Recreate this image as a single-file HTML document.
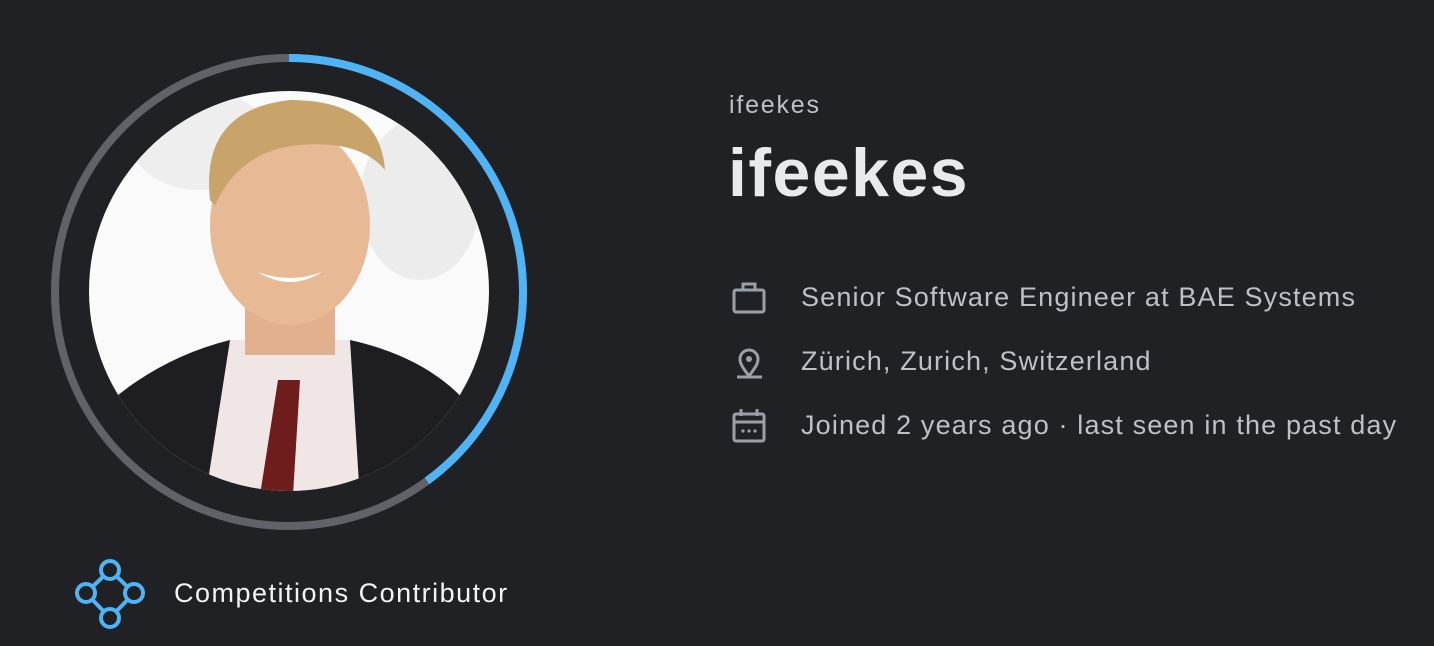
<!DOCTYPE html>
<html><head><meta charset="utf-8"><style>
html,body{margin:0;padding:0;background:#202124;width:1434px;height:646px;overflow:hidden;font-family:"Liberation Sans",sans-serif}
.t{position:absolute;white-space:nowrap}
.d{font-size:27px;color:#bdc1c6;letter-spacing:1.15px}
</style></head><body>
<svg class="t" style="left:0;top:0" width="600" height="646" viewBox="0 0 600 646">
<defs><clipPath id="c"><circle cx="289" cy="291" r="200"/></clipPath></defs>
<circle cx="289" cy="292" r="234" fill="none" stroke="#5f6368" stroke-width="8"/>
<path d="M289 58 A234 234 0 0 1 427 481" fill="none" stroke="#4fb3f6" stroke-width="8"/>
<g clip-path="url(#c)">
<rect x="80" y="80" width="420" height="420" fill="#fafafa"/>
<ellipse cx="200" cy="140" rx="70" ry="50" fill="#eeeeee"/>
<ellipse cx="420" cy="200" rx="60" ry="80" fill="#ececec"/>
<path d="M90 420 Q150 360 230 340 L350 340 Q440 360 480 420 L480 500 L90 500Z" fill="#1e1e22"/>
<path d="M230 340 L350 340 L360 500 L205 500Z" fill="#f1e6e6"/>
<path d="M278 380 L300 380 L293 495 L260 495Z" fill="#6e1c1c"/>
<rect x="245" y="290" width="90" height="65" fill="#e0b08f"/>
<ellipse cx="290" cy="225" rx="80" ry="100" fill="#e8b995"/>
<path d="M210 200 Q200 110 290 100 Q380 100 385 170 Q360 140 300 145 Q240 150 215 205Z" fill="#c9a46a"/>
<path d="M258 272 Q290 292 322 272 Q290 284 258 272Z" fill="#fff"/>
</g>
<g fill="none" stroke="#4fb3f6" stroke-width="4">
<line x1="110" y1="570" x2="86" y2="593"/><line x1="110" y1="570" x2="134" y2="593"/>
<line x1="86" y1="593" x2="110" y2="618"/><line x1="134" y1="593" x2="110" y2="618"/>
<circle cx="110" cy="570" r="9" fill="#202124"/><circle cx="86" cy="593" r="9" fill="#202124"/>
<circle cx="134" cy="593" r="9" fill="#202124"/><circle cx="110" cy="618" r="9" fill="#202124"/>
</g>
</svg>
<div class="t" style="left:174px;top:578px;font-size:27px;letter-spacing:1.5px;color:#f1f3f4">Competitions Contributor</div>
<div class="t" style="left:729px;top:91px;font-size:25px;letter-spacing:1.8px;color:#bdc1c6">ifeekes</div>
<div class="t" style="left:728px;top:134px;font-size:68px;letter-spacing:1.5px;font-weight:bold;color:#e8eaed">ifeekes</div>
<svg class="t" style="left:725px;top:275px" width="60" height="180" viewBox="0 0 60 180" fill="none" stroke="#9aa0a6" stroke-width="3">
<rect x="9" y="15" width="30" height="22" rx="2"/><path d="M18 15 V9 H30 V15"/>
<path d="M24 101 C18 93 15 89 15 84 A9 9 0 0 1 33 84 C33 89 30 93 24 101Z"/><circle cx="24" cy="84" r="3" fill="#9aa0a6" stroke="none"/>
<line x1="12" y1="102" x2="37" y2="102"/>
<rect x="9" y="139" width="30" height="27" rx="2"/><line x1="9" y1="147" x2="39" y2="147"/>
<line x1="16" y1="134" x2="16" y2="141"/><line x1="32" y1="134" x2="32" y2="141"/>
<g fill="#9aa0a6" stroke="none"><circle cx="18" cy="156" r="1.6"/><circle cx="24" cy="156" r="1.6"/><circle cx="30" cy="156" r="1.6"/></g>
</svg>
<div class="t d" style="left:801px;top:282px">Senior Software Engineer at BAE Systems</div>
<div class="t d" style="left:801px;top:346px">Zürich, Zurich, Switzerland</div>
<div class="t d" style="left:801px;top:410px">Joined 2 years ago · last seen in the past day</div>
</body></html>
